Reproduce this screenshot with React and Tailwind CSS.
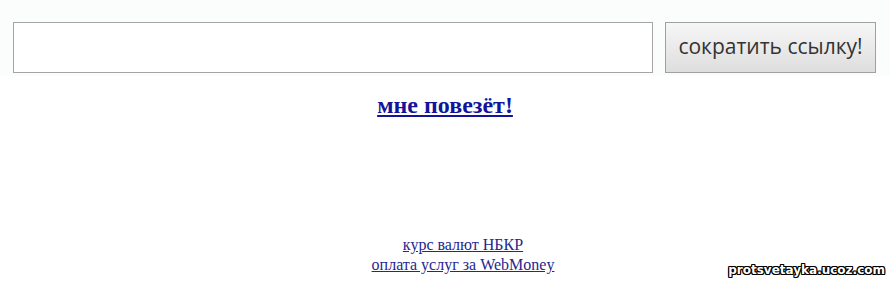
export default function App() {
  return (
    <div className="relative w-[890px] h-[284px] bg-white overflow-hidden">
      <div className="flex items-center pt-[22px] pl-[13px] pb-[3px] bg-[#fbfcfc]">
        <input
          type="text"
          className="w-[640px] h-[51px] shrink-0 bg-white border border-[#a5a5a5] outline-none"
        />
        <button className="ml-[12px] w-[211px] min-w-[211px] max-w-[211px] h-[51px] shrink-0 border border-[#a0a0a0] bg-gradient-to-b from-[#f6f6f6] to-[#dedede] text-[21px] text-[#333] font-['Open_Sans',sans-serif] leading-none pb-[2px]">
          сократить ссылку!
        </button>
      </div>
      <div className="flex justify-center mt-[15px]">
        <a
          href="#"
          className="font-['Liberation_Serif',serif] font-bold text-[24px] leading-[28px] text-[#14149a] underline"
        >
          мне повезёт!
        </a>
      </div>
      <div className="flex flex-col items-center mt-[116px] pl-[36px] font-['Liberation_Serif',serif] text-[16px] leading-[20px] text-[#262690]">
        <a href="#" className="underline">
          курс валют НБКР
        </a>
        <a href="#" className="underline">
          оплата услуг за WebMoney
        </a>
      </div>
      <div className="absolute right-[5px] bottom-[5px] font-['DejaVu_Sans',sans-serif] font-bold text-[12px] text-white [text-shadow:1px_0_0_#000,-1px_0_0_#000,0_1px_0_#000,0_-1px_0_#000,1px_1px_0_#000,-1px_-1px_0_#000,1px_-1px_0_#000,-1px_1px_0_#000]">
        protsvetayka.ucoz.com
      </div>
    </div>
  );
}
